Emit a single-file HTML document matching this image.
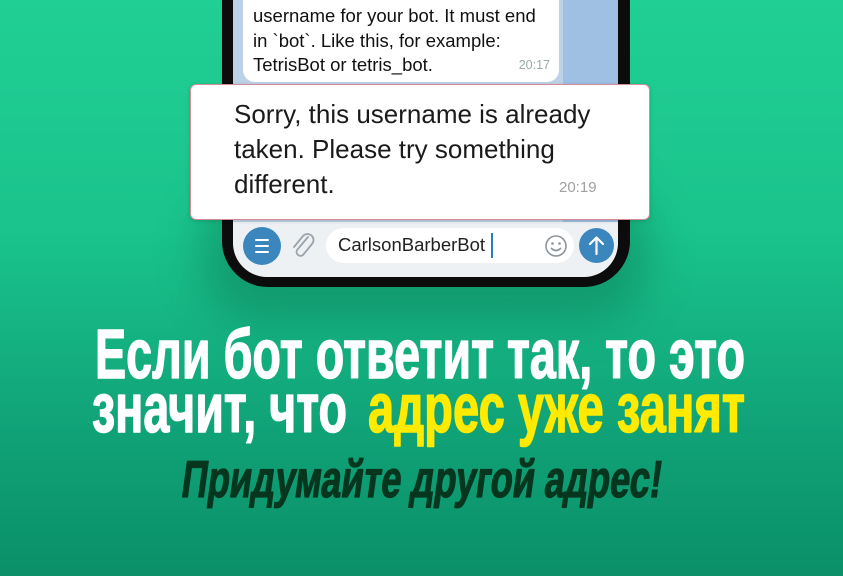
<!DOCTYPE html>
<html><head><meta charset="utf-8"><style>
*{margin:0;padding:0;box-sizing:border-box}
body{width:843px;height:576px;overflow:hidden;position:relative;font-family:"Liberation Sans",sans-serif;
background:linear-gradient(180deg,#20cf94 0%,#1ac48c 40%,#10a277 75%,#0b9068 100%)}
.shadow{position:absolute;left:200px;top:180px;width:450px;height:140px;border-radius:60px;background:rgba(0,60,40,.25);filter:blur(22px)}
.phone{position:absolute;left:222px;top:-40px;width:408px;height:327px;background:#0c0c0c;border-radius:0 0 46px 46px}
.screen{position:absolute;left:233px;top:-40px;width:385px;height:317px;border-radius:0 0 36px 36px;overflow:hidden;background:#9fbfe3}
.chatl{position:absolute;left:0;top:0;width:330px;height:300px;background:#bdd2e6}
.bubble{position:absolute;left:243px;top:-20px;width:316px;height:102px;background:#fff;border-radius:12px;font-size:18.5px;color:#111;line-height:24.5px;padding:24px 0 0 10px;white-space:nowrap}
.bubble .t{position:absolute;right:9px;bottom:5px;font-size:12.5px;color:#9aa}
.inbar{position:absolute;left:233px;top:222px;width:385px;height:55px;background:#eef1f4;border-radius:0 0 34px 34px}
.pop{position:absolute;left:190px;top:84px;width:460px;height:136px;background:#fff;border:1px solid #d58a98;border-radius:6px;box-shadow:0 1px 4px rgba(0,0,0,.15)}
.pop p{position:absolute;left:43px;top:12px;font-size:26px;line-height:35px;color:#1a1a1a;white-space:nowrap}
.pop .t{position:absolute;left:368px;top:94px;font-size:15px;color:#a0a0a0}
.circ{position:absolute;border-radius:50%;background:#3a86bd}
.field{position:absolute;left:326px;top:228px;width:248px;height:35px;background:#fff;border-radius:18px}
.field span{position:absolute;left:12px;top:6px;font-size:18.5px;color:#222}
.cur{position:absolute;left:491px;top:233px;width:2px;height:25px;background:#2b7fc0}
</style></head><body>
<div class="shadow"></div>
<div class="phone"></div>
<div class="screen"><div class="chatl"></div></div>
<div class="bubble">username for your bot. It must end<br>in `bot`. Like this, for example:<br>TetrisBot or tetris_bot.<span class="t">20:17</span></div>
<div class="inbar"></div>
<div class="circ" style="left:243px;top:227px;width:38px;height:38px"></div>
<svg style="position:absolute;left:243px;top:227px" width="38" height="38"><g stroke="#fff" stroke-width="2" stroke-linecap="round"><path d="M13 13h12M13 19h12M13 25h12"/></g></svg>
<svg style="position:absolute;left:289px;top:231px" width="28" height="30" viewBox="0 0 28 30"><path d="M19 6 L8 19 a4 4 0 0 0 6 5 L23 13 a6 6 0 0 0 -9 -8 L5 16" fill="none" stroke="#9aa3ab" stroke-width="1.8" stroke-linecap="round"/></svg>
<div class="field"><span>CarlsonBarberBot</span></div>
<div class="cur"></div>
<svg style="position:absolute;left:544px;top:234px" width="24" height="24"><circle cx="12" cy="12" r="10" fill="none" stroke="#8c949a" stroke-width="1.6"/><circle cx="8.5" cy="9.5" r="1.3" fill="#8c949a"/><circle cx="15.5" cy="9.5" r="1.3" fill="#8c949a"/><path d="M7 14q5 5 10 0" fill="none" stroke="#8c949a" stroke-width="1.6"/></svg>
<div class="circ" style="left:579px;top:228px;width:35px;height:35px"></div>
<svg style="position:absolute;left:579px;top:228px" width="35" height="35"><path d="M17.5 26V10M11 16l6.5-6.5L24 16" fill="none" stroke="#fff" stroke-width="2.2" stroke-linecap="round" stroke-linejoin="round"/></svg>
<div class="pop"><p>Sorry, this username is already<br>taken. Please try something<br>different.</p><span class="t">20:19</span></div>
<svg style="position:absolute;left:0;top:0" width="843" height="576">
<g font-family="'Liberation Sans Narrow','Liberation Sans',sans-serif" font-weight="bold" stroke-linejoin="round">
<g transform="translate(0,378) scale(1,1.25)"><text x="95" y="0" font-size="56" fill="#fff" stroke="#fff" stroke-width="1.2" textLength="650" lengthAdjust="spacingAndGlyphs">Если бот ответит так, то это</text></g>
<g transform="translate(0,432) scale(1,1.25)"><text x="92" y="0" font-size="56" fill="#fff" stroke="#fff" stroke-width="1.2" textLength="255" lengthAdjust="spacingAndGlyphs">значит, что</text>
<text x="368" y="0" font-size="56" fill="#ffea00" stroke="#ffea00" stroke-width="1.2" textLength="377" lengthAdjust="spacingAndGlyphs">адрес уже занят</text></g>
<g transform="translate(0,497) scale(1,1.3) skewX(-10)"><text x="180" y="0" font-size="40" fill="#07361f" stroke="#07361f" stroke-width="1" textLength="480" lengthAdjust="spacingAndGlyphs">Придумайте другой адрес!</text></g>
</g></svg>
</body></html>
